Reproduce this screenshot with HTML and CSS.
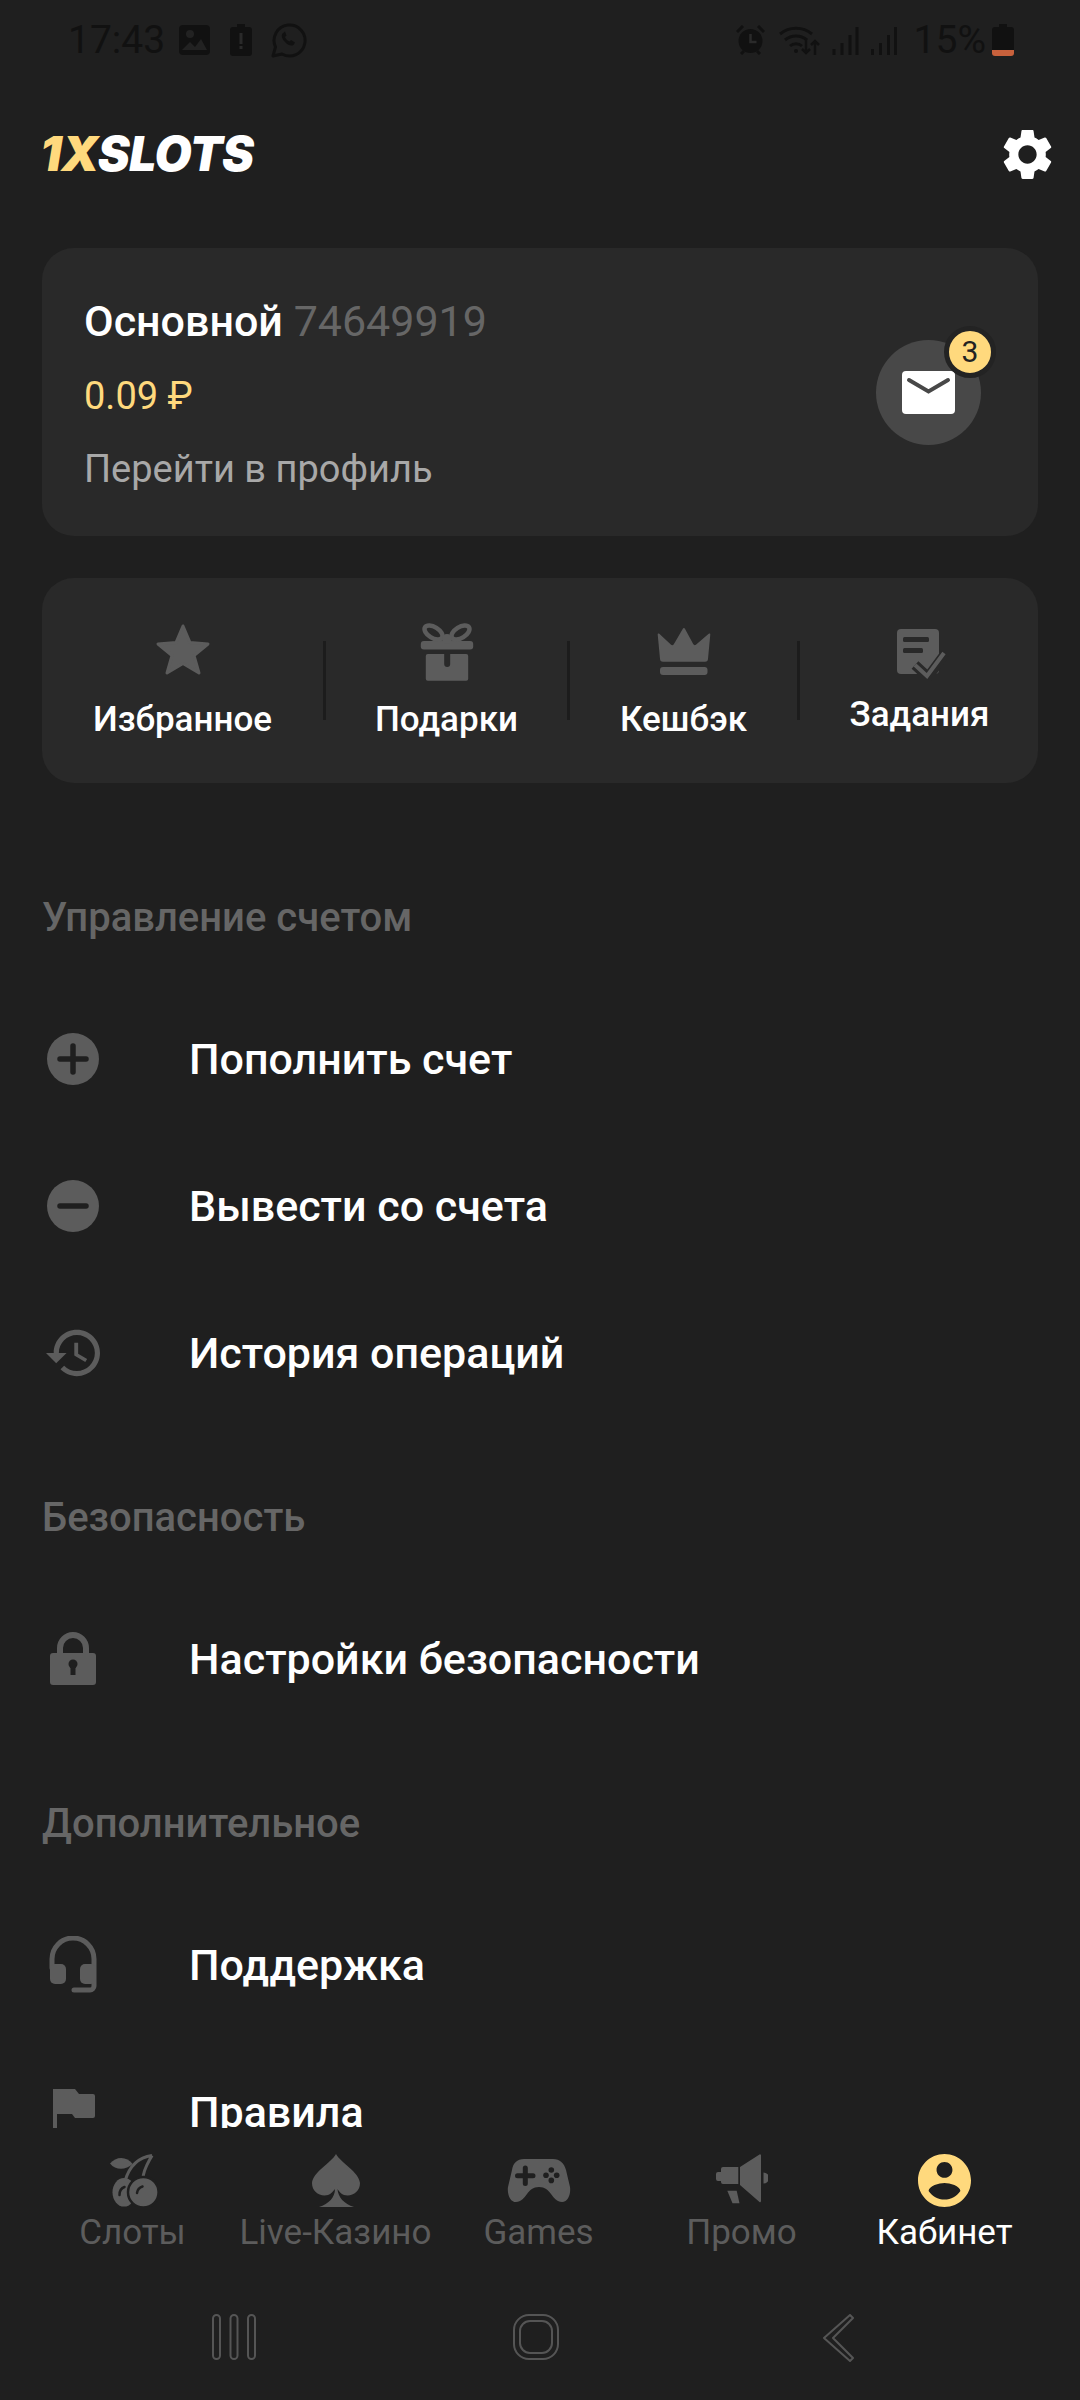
FILE: index.html
```html
<!DOCTYPE html>
<html lang="ru">
<head>
    <meta charset="UTF-8">
    <meta name="viewport" content="width=device-width, initial-scale=1.0">
    <title>1XSLOTS - Кабинет</title>
    <link rel="stylesheet" href="styles.css">
</head>
<body>
    <div class="app">
        <!-- Строка состояния -->
        <div class="status-bar">
            <div class="status-left">
                <span class="status-time">17:43</span>
                <svg class="st-image" width="31" height="30" viewBox="0 0 31 30">
                    <rect x="0" y="0" width="31" height="30" rx="4" fill="#111"/>
                    <circle cx="11" cy="9" r="4" fill="#222"/>
                    <path d="M3 25l8-8 5 5 6-8 6 11z" fill="#222"/>
                </svg>
                <svg class="st-alert" width="22" height="32" viewBox="0 0 22 32">
                    <path d="M7 0h8v3h4a3 3 0 0 1 3 3v23a3 3 0 0 1-3 3H3a3 3 0 0 1-3-3V6a3 3 0 0 1 3-3h4z" fill="#111"/>
                    <rect x="9.500" y="9" width="3" height="11" fill="#2a2a2a"/>
                    <rect x="9.500" y="22" width="3" height="3" fill="#2a2a2a"/>
                </svg>
                <svg class="st-whatsapp" width="36" height="35" viewBox="0 0 36 35">
                    <path d="M2 33l2.500-9A15.500 15.500 0 1 1 11 31z" fill="none" stroke="#111" stroke-width="3" stroke-linejoin="round"/>
                    <path d="M12 10c-2 2-1.500 5 1.500 8.500s6.500 5 9 3.500l1.500-2.500-4-2.500-1.500 1.500c-2-.5-4-3-4.500-4.500l1.500-1.500-1.500-4z" fill="#111"/>
                </svg>
            </div>
            <div class="status-right">
                <svg class="st-alarm" width="29" height="30" viewBox="0 0 29 30">
                    <circle cx="14.500" cy="16" r="12" fill="#111"/>
                    <path d="M1 7l6-6M28 7l-6-6M5 29l3-3M24 29l-3-3" stroke="#111" stroke-width="3"/>
                    <path d="M14.500 9v8h6" fill="none" stroke="#2a2a2a" stroke-width="2.500"/>
                </svg>
                <svg class="st-wifi" width="42" height="30" viewBox="0 0 42 30">
                    <path d="M1 9a25 25 0 0 1 32 0M6 15a17 17 0 0 1 22 0M11 21a9 9 0 0 1 12 0" fill="none" stroke="#111" stroke-width="3"/>
                    <circle cx="17" cy="26" r="2" fill="#111"/>
                    <path d="M27 14v14M23 24l4 4 4-4M36 30V16M32 20l4-4 4 4" fill="none" stroke="#111" stroke-width="2.500"/>
                </svg>
                <svg class="st-signal" width="27" height="30" viewBox="0 0 27 30">
                    <path d="M2 30v-6M10 30V18M18 30V10M25 30V2" stroke="#111" stroke-width="3"/>
                </svg>
                <svg class="st-signal" width="28" height="30" viewBox="0 0 27 30">
                    <path d="M2 30v-6M10 30V18M18 30V10M25 30V2" stroke="#111" stroke-width="3"/>
                </svg>
                <span class="status-percent">15%</span>
                <svg class="st-battery" width="22" height="32" viewBox="0 0 22 32">
                    <path d="M7 0h8v3h4a3 3 0 0 1 3 3v20H0V6a3 3 0 0 1 3-3h4z" fill="#111"/>
                    <path d="M0 26h22v3a3 3 0 0 1-3 3H3a3 3 0 0 1-3-3z" fill="#c8613c"/>
                </svg>
            </div>
        </div>

        <!-- Шапка -->
        <header class="top-bar">
            <div class="logo"><span class="logo-x">1X</span>SLOTS</div>
            <svg class="gear" width="61" height="61" viewBox="0 0 24 24">
                <path d="M19.140 12.940c.04-.3.06-.61.06-.94 0-.32-.02-.64-.07-.94l2.030-1.580c.18-.14.23-.41.12-.61l-1.920-3.320c-.12-.22-.37-.29-.59-.22l-2.390.96c-.5-.38-1.030-.7-1.620-.94l-.36-2.540c-.04-.24-.24-.41-.48-.41h-3.840c-.24 0-.43.17-.47.41l-.36 2.540c-.59.24-1.130.57-1.620.94l-2.390-.96c-.22-.08-.47 0-.59.22L2.740 8.870c-.12.21-.08.47.12.61l2.030 1.580c-.05.3-.09.63-.09.94s.02.64.07.94l-2.030 1.580c-.18.14-.23.41-.12.61l1.920 3.320c.12.22.37.29.59.22l2.390-.96c.5.38 1.030.7 1.620.94l.36 2.540c.05.24.24.41.48.41h3.840c.24 0 .44-.17.47-.41l.36-2.540c.59-.24 1.130-.56 1.620-.94l2.390.96c.22.08.47 0 .59-.22l1.920-3.320c.12-.22.07-.47-.12-.61l-2.010-1.580zM12 15.600c-1.980 0-3.600-1.620-3.600-3.600s1.620-3.600 3.600-3.600 3.600 1.620 3.600 3.600-1.620 3.600-3.600 3.600z" fill="#fff"/>
            </svg>
        </header>

        <main class="content">
            <!-- Счет -->
            <section class="card account">
                <div class="account-info">
                    <div class="account-name">Основной <span class="account-id">74649919</span></div>
                    <div class="account-balance">0.09 ₽</div>
                    <div class="account-link">Перейти в профиль</div>
                </div>
                <div class="mail">
                    <svg width="53" height="43" viewBox="0 0 53 43">
                        <rect width="53" height="43" rx="4" fill="#fff"/>
                        <path d="M7 9l19.500 11.500L46 9" fill="none" stroke="#484848" stroke-width="4" stroke-linecap="round"/>
                    </svg>
                    <span class="mail-badge">3</span>
                </div>
            </section>

            <!-- Быстрые ссылки -->
            <section class="card perks">
                <div class="perk perk-first">
                    <svg width="60" height="58" viewBox="0 0 60 58">
                        <path d="M30 3l7 16.500 18 1.500-14 11.500 5 17.500-16-9.500-16 9.500 5-17.500L5 21l18-1.500z" fill="#5c5c5c" stroke="#5c5c5c" stroke-width="3" stroke-linejoin="round"/>
                    </svg>
                    <span class="perk-label">Избранное</span>
                </div>
                <div class="perk-divider"></div>
                <div class="perk perk-second">
                    <svg width="60" height="58" viewBox="0 0 60 58">
                        <rect x="3.800" y="18" width="52.400" height="8.500" rx="3" fill="#5c5c5c"/>
                        <path d="M8.800 33a2 2 0 0 1 2-2h16.400v10a3 3 0 0 0 6 0V31h16a2 2 0 0 1 2 2v22.700a2 2 0 0 1-2 2H10.800a2 2 0 0 1-2-2z" fill="#5c5c5c"/>
                        <ellipse cx="16.500" cy="9.500" rx="10" ry="5.500" transform="rotate(32 16.500 9.500)" fill="none" stroke="#5c5c5c" stroke-width="4.500"/>
                        <ellipse cx="43.500" cy="9.500" rx="10" ry="5.500" transform="rotate(-32 43.500 9.500)" fill="none" stroke="#5c5c5c" stroke-width="4.500"/>
                        <circle cx="30" cy="16" r="5" fill="#5c5c5c"/>
                    </svg>
                    <span class="perk-label">Подарки</span>
                </div>
                <div class="perk-divider"></div>
                <div class="perk perk-third">
                    <svg width="60" height="58" viewBox="0 0 60 58">
                        <path d="M3.700 11.500a1 1 0 0 1 1.600-.8l11.500 10.800a2 2 0 0 0 3-.3L29 5.500a1 1 0 0 1 1.800 0l8.400 15.500a2 2 0 0 0 3 .5l12.500-10.800a1 1 0 0 1 1.600.8L54 35.700a3 3 0 0 1-3 3H9a3 3 0 0 1-3-3z" fill="#5c5c5c"/>
                        <rect x="6" y="44" width="47.500" height="8" rx="3" fill="#5c5c5c"/>
                    </svg>
                    <span class="perk-label">Кешбэк</span>
                </div>
                <div class="perk-divider"></div>
                <div class="perk perk-fourth">
                    <svg width="60" height="58" viewBox="0 0 60 58">
                        <rect x="7" y="6" width="42" height="45" rx="4" fill="#5c5c5c"/>
                        <rect x="13" y="14" width="26" height="5" rx="1.500" fill="#292929"/>
                        <rect x="13" y="25" width="20" height="5" rx="1.500" fill="#292929"/>
                        <path d="M25 42l13 12 17-23" fill="none" stroke="#292929" stroke-width="10"/>
                        <path d="M25 42l12 11 17-23" fill="none" stroke="#5c5c5c" stroke-width="4"/>
                    </svg>
                    <span class="perk-label">Задания</span>
                </div>
            </section>

            <!-- Управление счетом -->
            <section class="menu-group">
                <h3 class="menu-title">Управление счетом</h3>
                <div class="menu-row">
                    <svg class="menu-icon" width="54" height="54" viewBox="0 0 54 54">
                        <circle cx="27" cy="27" r="26" fill="#5c5c5c"/>
                        <path d="M14 27h26M27 14v26" stroke="#1f1f1f" stroke-width="5.500" stroke-linecap="round"/>
                    </svg>
                    <span>Пополнить счет</span>
                </div>
                <div class="menu-row">
                    <svg class="menu-icon" width="54" height="54" viewBox="0 0 54 54">
                        <circle cx="27" cy="27" r="26" fill="#5c5c5c"/>
                        <path d="M14 27h26" stroke="#1f1f1f" stroke-width="5.500" stroke-linecap="round"/>
                    </svg>
                    <span>Вывести со счета</span>
                </div>
                <div class="menu-row">
                    <svg class="menu-icon" width="54" height="54" viewBox="1 3 21 18">
                        <path d="M13 3c-4.970 0-9 4.030-9 9H1l3.890 3.890.07.14L9 12H6c0-3.870 3.130-7 7-7s7 3.130 7 7-3.130 7-7 7c-1.930 0-3.680-.79-4.940-2.060l-1.420 1.420C8.270 19.990 10.510 21 13 21c4.970 0 9-4.030 9-9s-4.030-9-9-9zm-1 5v5l4.280 2.540.72-1.210-3.500-2.080V8H12z" fill="#5c5c5c"/>
                    </svg>
                    <span>История операций</span>
                </div>
            </section>

            <!-- Безопасность -->
            <section class="menu-group">
                <h3 class="menu-title">Безопасность</h3>
                <div class="menu-row">
                    <svg class="menu-icon" width="54" height="54" viewBox="0 0 54 54">
                        <path d="M14 23v-7a13 13 0 0 1 26 0v7" fill="none" stroke="#5c5c5c" stroke-width="6"/>
                        <rect x="4" y="21" width="46" height="32" rx="3" fill="#5c5c5c"/>
                        <circle cx="27" cy="32" r="4.500" fill="#1f1f1f"/>
                        <rect x="24.500" y="33" width="5" height="10" fill="#1f1f1f"/>
                    </svg>
                    <span>Настройки безопасности</span>
                </div>
            </section>

            <!-- Дополнительное -->
            <section class="menu-group">
                <h3 class="menu-title">Дополнительное</h3>
                <div class="menu-row">
                    <svg class="menu-icon" width="54" height="58" viewBox="0 0 54 58">
                        <path d="M6 32V23a21 21 0 0 1 42 0v27a4 4 0 0 1-4 4H28" fill="none" stroke="#5c5c5c" stroke-width="5" stroke-linecap="round"/>
                        <rect x="4" y="28" width="16" height="20" rx="5" fill="#5c5c5c"/>
                        <rect x="34" y="28" width="16" height="20" rx="5" fill="#5c5c5c"/>
                    </svg>
                    <span>Поддержка</span>
                </div>
                <div class="menu-row">
                    <svg class="menu-icon" width="54" height="46" viewBox="0 0 54 46">
                        <path d="M7 0h22l4 5h14a2 2 0 0 1 2 2v20a2 2 0 0 1-2 2H29l-3-4H11v21H7z" fill="#5c5c5c"/>
                    </svg>
                    <span>Правила</span>
                </div>
            </section>
        </main>

        <!-- Нижнее меню -->
        <nav class="tab-bar">
            <div class="tab">
                <svg width="50" height="53" viewBox="0 0 50 53">
                    <path d="M44 1.500C33 3 22 10 17 27M44 1.500C40 9 35 16 35 25" fill="none" stroke="#5c5c5c" stroke-width="3"/>
                    <path d="M2 9.500C8 2 19 2 24.700 10 18 16 8 17 2 9.500z" fill="#5c5c5c"/>
                    <ellipse cx="16" cy="38.300" rx="11.500" ry="14.300" fill="#5c5c5c"/>
                    <circle cx="35.300" cy="38.300" r="15.300" fill="#5c5c5c" stroke="#1f1f1f" stroke-width="2.500"/>
                    <path d="M16.500 33c-3 1-5 4-5 8M34.500 32.500c-3 1-5 3-5.500 6.500" fill="none" stroke="#1f1f1f" stroke-width="2.500" stroke-linecap="round"/>
                </svg>
                <span class="tab-label">Слоты</span>
            </div>
            <div class="tab">
                <svg width="50" height="53" viewBox="0 0 50 53">
                    <path d="M25 0C30 9 48 18 49 29 49 38 41 43 33 41 30 40 28 37 26.500 35 27 43 33 50 43 53H8C18 50 24 43 24 35 22 37 20 40 17 41 9 43 1 38 1 29 2 18 20 9 25 0z" fill="#5c5c5c"/>
                </svg>
                <span class="tab-label">Live-Казино</span>
            </div>
            <div class="tab">
                <svg width="66" height="53" viewBox="0 0 66 53">
                    <path d="M18 5h29c7 0 11 4 13 11l4 17c1 7-2 15-8 15-5 0-8-4-11-8-3-4-6-7-12-7s-9 3-12 7c-3 4-6 8-11 8-6 0-9-8-8-15l4-17C7 9 11 5 18 5z" fill="#5c5c5c"/>
                    <path d="M11.500 21.700h15.500M19.300 14v15.500" stroke="#1f1f1f" stroke-width="5" stroke-linecap="round"/>
                    <circle cx="45.300" cy="16" r="2.800" fill="#1f1f1f"/>
                    <circle cx="40" cy="21.200" r="2.800" fill="#1f1f1f"/>
                    <circle cx="50.700" cy="21.200" r="2.800" fill="#1f1f1f"/>
                    <circle cx="45.300" cy="26.400" r="2.800" fill="#1f1f1f"/>
                </svg>
                <span class="tab-label">Games</span>
            </div>
            <div class="tab">
                <svg width="52" height="53" viewBox="0 0 52 53">
                    <path d="M0 20a2 2 0 0 1 2-2h3v-3a2 2 0 0 1 2-2h15.300v17H7a2 2 0 0 1-2-2v-1H2a2 2 0 0 1-2-2z" fill="#5c5c5c"/>
                    <path d="M24 13L43.500.500a1 1 0 0 1 1.500 1V47a1 1 0 0 1-1.500 1L24 31z" fill="#5c5c5c"/>
                    <path d="M47.500 18.500a5.500 5.500 0 0 1 0 11z" fill="#5c5c5c"/>
                    <path d="M11.300 36.700h9.400l2.800 12.600h-7z" fill="#5c5c5c"/>
                </svg>
                <span class="tab-label">Промо</span>
            </div>
            <div class="tab tab-active">
                <svg width="53" height="53" viewBox="2 2 20 20">
                    <path d="M12 2C6.480 2 2 6.480 2 12s4.480 10 10 10 10-4.480 10-10S17.520 2 12 2zm0 3c1.660 0 3 1.340 3 3s-1.340 3-3 3-3-1.340-3-3 1.340-3 3-3zm0 14.200c-2.500 0-4.710-1.280-6-3.220.03-1.990 4-3.080 6-3.080 1.990 0 5.970 1.090 6 3.080-1.290 1.940-3.500 3.220-6 3.220z" fill="#ffd97d"/>
                </svg>
                <span class="tab-label">Кабинет</span>
            </div>
        </nav>

        <!-- Системные кнопки -->
        <div class="system-nav">
            <svg width="44" height="46" viewBox="0 0 44 46">
                <rect x="1" y="1" width="7" height="44" rx="3.500" fill="none" stroke="#555" stroke-width="2"/>
                <rect x="18.500" y="1" width="7" height="44" rx="3.500" fill="none" stroke="#555" stroke-width="2"/>
                <rect x="36" y="1" width="7" height="44" rx="3.500" fill="none" stroke="#555" stroke-width="2"/>
            </svg>
            <svg width="46" height="46" viewBox="0 0 46 46">
                <rect x="1" y="1" width="44" height="44" rx="15" fill="none" stroke="#555" stroke-width="2"/>
                <rect x="7" y="7" width="32" height="32" rx="10" fill="none" stroke="#555" stroke-width="2"/>
            </svg>
            <svg width="32" height="48" viewBox="0 0 32 48">
                <path d="M28 1l3 3-20 20 20 20-3 3L2 24z" fill="none" stroke="#555" stroke-width="2" stroke-linejoin="round"/>
            </svg>
        </div>
    </div>
</body>
</html>
```
FILE: styles.css
```css
* {
    box-sizing: border-box;
}

body {
    margin: 0;
    padding: 0;
    background-color: #1f1f1f;
    color: #ffffff;
    font-family: Roboto, "Noto Sans", sans-serif;
}

.app {
    display: flex;
    flex-direction: column;
    width: 1080px;
    height: 2400px;
    overflow: hidden;
}

/* Строка состояния */
.status-bar {
    display: flex;
    flex: none;
    justify-content: space-between;
    height: 78px;
    padding: 24px 66px 0 68px;
    color: #111111;
}

.status-left, .status-right {
    display: flex;
    align-items: center;
    height: 32px;
}

.status-time, .status-percent {
    font-size: 39px;
    line-height: 32px;
}

.st-image {
    margin-left: 14px;
}

.st-alert {
    margin-left: 20px;
}

.st-whatsapp {
    margin-left: 19px;
}

.st-wifi {
    margin-left: 14px;
}

.st-signal {
    margin-left: 11px;
}

.status-percent {
    margin-left: 16px;
    margin-right: 6px;
}

/* Шапка */
.top-bar {
    display: flex;
    flex: none;
    align-items: center;
    justify-content: space-between;
    height: 152px;
    margin-bottom: 18px;
    padding: 0 22px 0 40px;
}

.logo {
    font-family: Inter, Roboto, sans-serif;
    font-size: 48px;
    font-weight: 900;
    font-style: italic;
    line-height: 44px;
    letter-spacing: -0.5px;
}

.logo-x {
    color: #ffd97d;
}

.content {
    flex: 1;
    min-height: 0;
    overflow: hidden;
}

.card {
    margin: 0 42px;
    background-color: #292929;
    border-radius: 32px;
}

/* Счет */
.account {
    display: flex;
    align-items: center;
    justify-content: space-between;
    height: 288px;
    padding: 0 57px 0 42px;
}

.account-info {
    padding-top: 5px;
}

.account-name {
    font-size: 43px;
    font-weight: 500;
    line-height: 50px;
}

.account-id {
    color: #666666;
    font-weight: 400;
}

.account-balance {
    margin-top: 25px;
    color: #ffd97d;
    font-size: 38px;
    line-height: 50px;
}

.account-link {
    margin-top: 23px;
    color: #a8a8a8;
    font-size: 38px;
    line-height: 50px;
}

.mail {
    position: relative;
    display: flex;
    align-items: center;
    justify-content: center;
    width: 105px;
    height: 105px;
    background-color: #484848;
    border-radius: 50%;
}

.mail-badge {
    position: absolute;
    top: -14px;
    right: -15px;
    width: 52px;
    height: 52px;
    color: #222222;
    font-size: 30px;
    line-height: 42px;
    text-align: center;
    background-color: #ffd97d;
    border: 5px solid #232323;
    border-radius: 50%;
}

/* Быстрые ссылки */
.perks {
    display: flex;
    align-items: flex-start;
    height: 205px;
    margin-top: 42px;
    padding-top: 45px;
}

.perk {
    display: flex;
    flex: none;
    flex-direction: column;
    align-items: center;
}

.perk-first {
    width: 281px;
}

.perk-second {
    width: 241px;
}

.perk-third {
    width: 227px;
}

.perk-fourth {
    width: 239px;
}

.perk svg {
    display: block;
}

.perk-label {
    margin-top: 17px;
    font-size: 35px;
    font-weight: 500;
    line-height: 44px;
}

.perk-fourth .perk-label {
    margin-top: 12px;
}

.perk-divider {
    flex: none;
    width: 3px;
    height: 79px;
    margin-top: 18px;
    background-color: #1c1c1c;
}

/* Списки */
.menu-group {
    margin-top: 60px;
}

.perks + .menu-group {
    margin-top: 103px;
}

.menu-title {
    height: 62px;
    margin: 0 0 37px;
    padding-left: 42px;
    color: #666666;
    font-size: 40px;
    font-weight: 500;
    line-height: 64px;
}

.menu-row {
    display: flex;
    align-items: center;
    height: 147px;
    padding-left: 46px;
    font-size: 43px;
    font-weight: 500;
}

.menu-icon {
    flex: none;
    margin-right: 89px;
}

/* Нижнее меню */
.tab-bar {
    display: grid;
    flex: none;
    grid-template-columns: repeat(5, 203px);
    height: 142px;
    padding: 26px 0 0 31px;
}

.tab {
    display: flex;
    flex-direction: column;
    align-items: center;
}

.tab svg {
    display: block;
}

.tab-label {
    margin-top: 4px;
    color: #5c5c5c;
    font-size: 35px;
    line-height: 44px;
}

.tab-active .tab-label {
    color: #ffffff;
}

/* Системные кнопки */
.system-nav {
    display: grid;
    flex: none;
    grid-template-columns: repeat(3, 302px);
    justify-content: center;
    justify-items: center;
    height: 130px;
    padding: 44px 8px 0 0;
}
```
